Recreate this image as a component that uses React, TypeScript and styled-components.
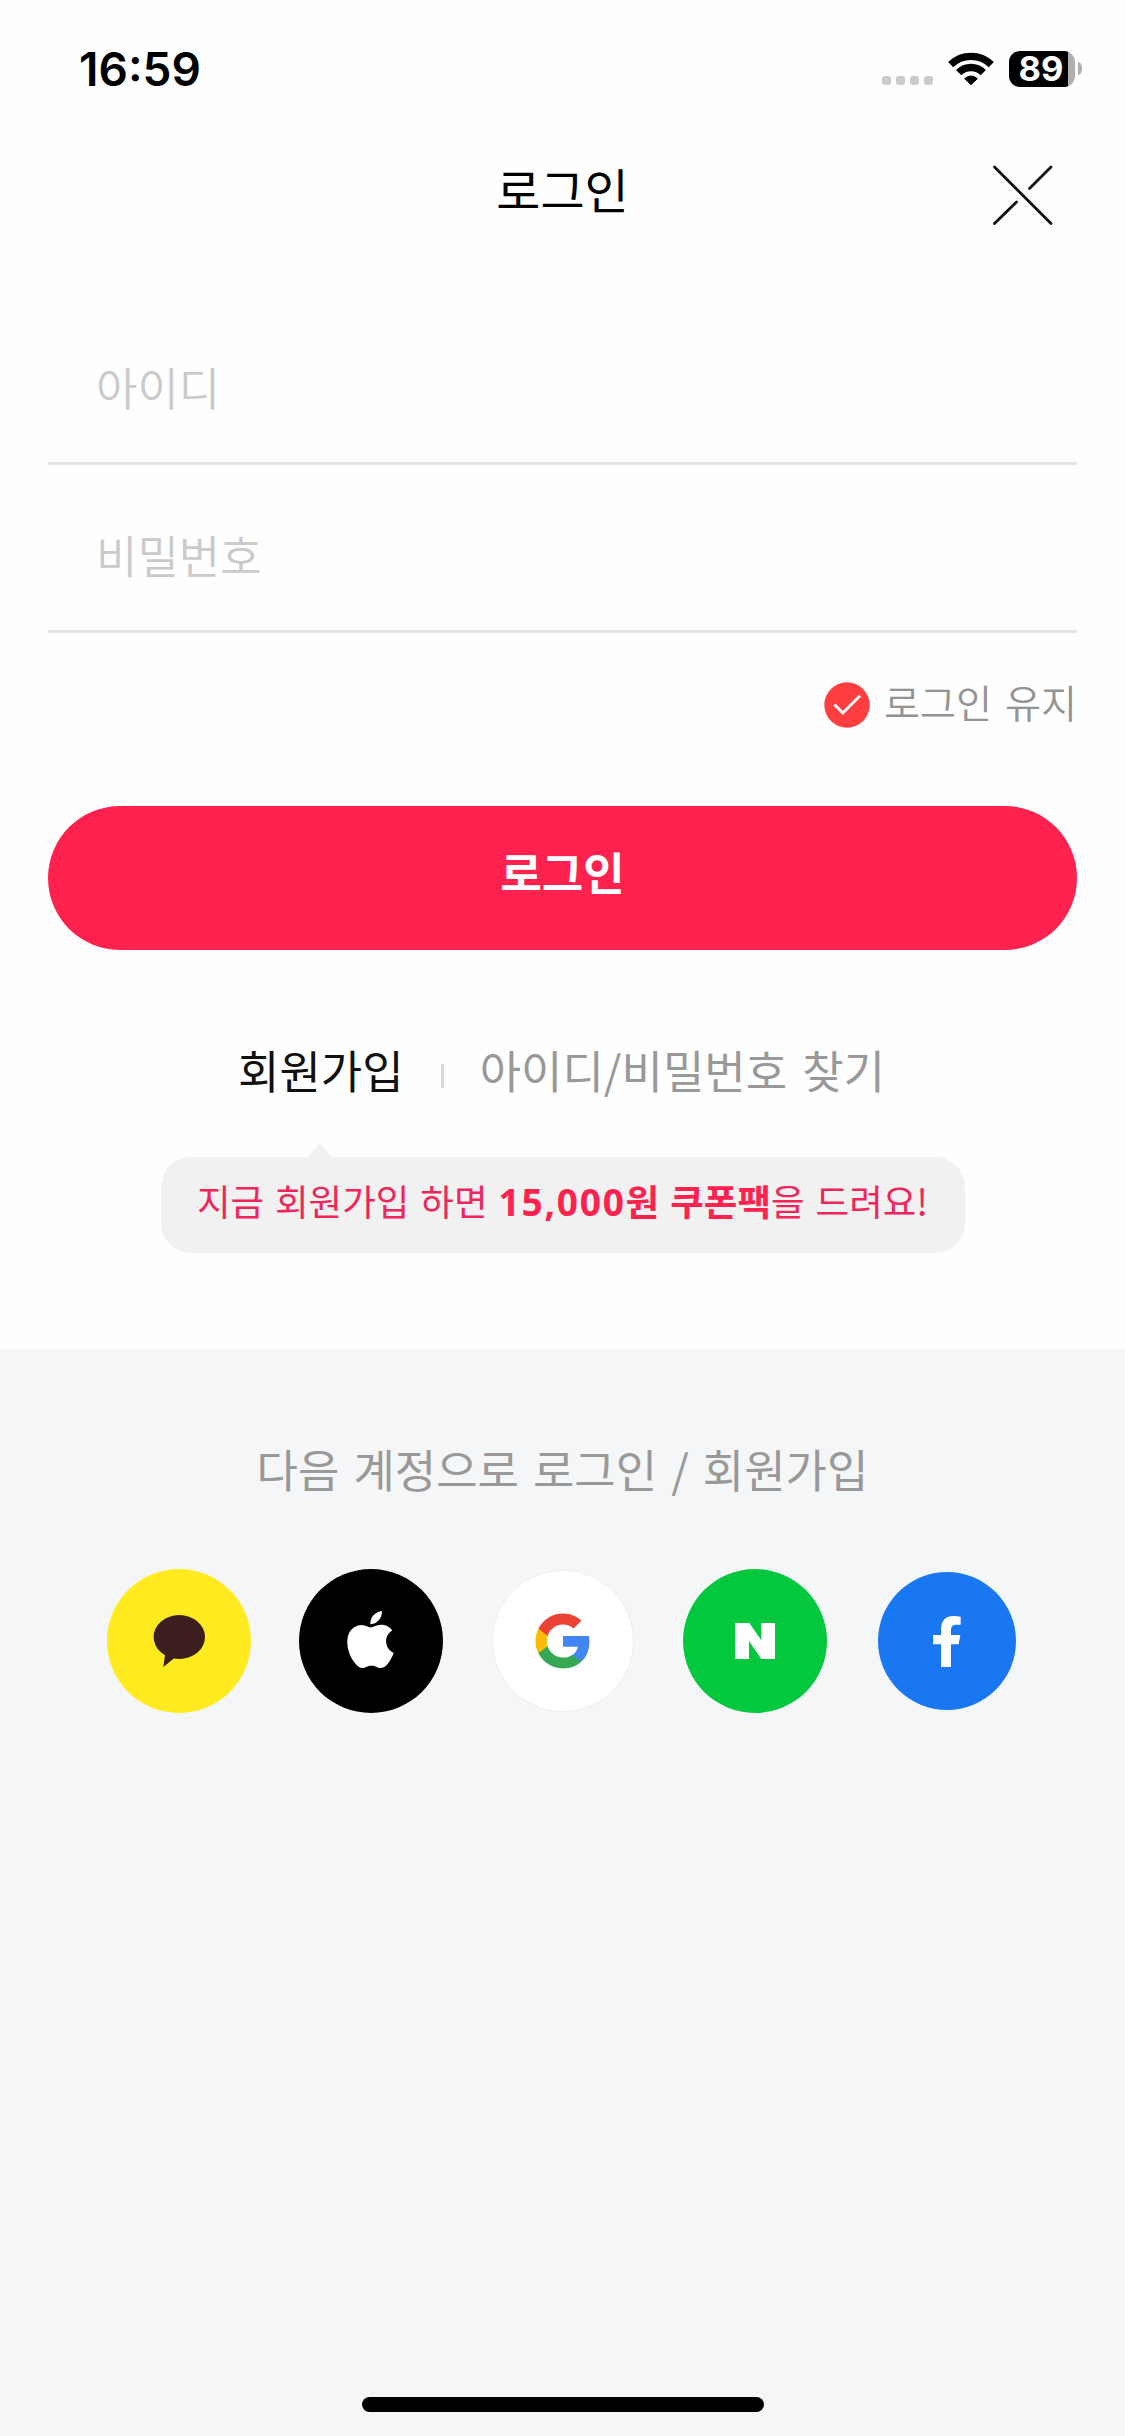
import React from "react";
import styled, { createGlobalStyle } from "styled-components";
import { SiApple } from "react-icons/si";

const GlobalStyle = createGlobalStyle`
  * { box-sizing: border-box; }
  body {
    margin: 0;
    background: #fefefe;
    font-family: "Noto Sans CJK KR", "Noto Sans", sans-serif;
    color: #000;
  }
  button { font: inherit; border: 0; padding: 0; background: none; color: inherit; }
`;

const Screen = styled.div`
  width: 1125px;
  height: 2436px;
  display: flex;
  flex-direction: column;
  overflow: hidden;
`;

const StatusBar = styled.div`
  height: 132px;
  padding: 51px 43px 0 79px;
  display: flex;
  justify-content: space-between;
  align-items: flex-start;
`;

const Clock = styled.span`
  font: 600 46px/37px Inter, sans-serif;
`;

const StatusIcons = styled.div`
  height: 36px;
  display: flex;
  align-items: flex-start;
`;

const Signal = styled.div`
  display: flex;
  gap: 5px;
  padding-top: 25px;
  margin-right: 15px;
`;

const SignalDot = styled.i`
  width: 9px;
  height: 9px;
  border-radius: 3px;
  background: #cbcbcb;
`;

const WifiIcon = styled.svg`
  width: 46px;
  height: 34px;
  margin: 1px 15px 0 0;
`;

const Battery = styled.div`
  width: 66px;
  height: 36px;
  border-radius: 11px;
  background: linear-gradient(to right, #000 59px, #b0b0b0 59px);
  display: flex;
  justify-content: center;
  padding-right: 2px;
  color: #fff;
  font: 700 34.5px/36px Inter, sans-serif;
`;

const BatteryCap = styled.i`
  width: 4px;
  height: 13px;
  margin: 11px 0 0 3px;
  border-radius: 0 4px 4px 0 / 0 6px 6px 0;
  background: #b0b0b0;
`;

const Header = styled.header`
  height: 162px;
  display: grid;
  grid-template-columns: 1fr auto 1fr;
  padding: 0 71px 0 0;
`;

const Title = styled.h1`
  grid-column: 2;
  margin: 0;
  padding-left: 71px;
  font-weight: 400;
  font-size: 48px;
  line-height: 112px;
  height: 112px;
`;

const CloseButton = styled.button`
  justify-self: end;
  align-self: start;
  margin-top: 32px;
  height: 62px;
  svg { display: block; }
`;

const Form = styled.form`
  padding: 0 48px;
  display: flex;
  flex-direction: column;
`;

const Field = styled.label<{ $height: number }>`
  height: ${(p) => p.$height}px;
  padding: 0 48px 40px;
  border-bottom: 3px solid #e5e5e5;
  display: flex;
  align-items: flex-end;
`;

const Placeholder = styled.span`
  font-size: 45px;
  line-height: 70px;
  font-weight: 350;
  color: #cacaca;
`;

const KeepRow = styled.div`
  height: 173px;
  padding-top: 39px;
  display: flex;
  justify-content: flex-end;
  align-items: flex-start;
  gap: 14px;
`;

const CheckIcon = styled.svg`
  width: 46px;
  height: 46px;
  margin-top: 10px;
`;

const KeepLabel = styled.span`
  font-size: 39.2px;
  line-height: 58px;
  font-weight: 350;
  word-spacing: 4px;
  color: #939393;
`;

const LoginButton = styled.button`
  && {
    height: 144px;
    border-radius: 72px;
    background: #ff224f;
    color: #fff;
    font-weight: 700;
    font-size: 45px;
    line-height: 132px;
    padding-bottom: 12px;
  }
`;

const Links = styled.nav`
  height: 193px;
  padding: 85px 2px 0 0;
  display: flex;
  justify-content: center;
  align-items: flex-start;
  font-size: 45px;
  line-height: 70px;
  word-spacing: 5px;
`;

const JoinLink = styled.a`
  color: #111;
`;

const FindLink = styled.a`
  color: #999;
`;

const Divider = styled.i`
  width: 3px;
  height: 24px;
  margin: 29px 36px 0 37px;
  background: #d8d8d8;
`;

const Coupon = styled.div`
  align-self: center;
  display: flex;
  flex-direction: column;
  height: 206px;
`;

const CouponArrow = styled.i`
  width: 24px;
  height: 14px;
  margin-left: 147px;
  background: #f1f1f1;
  clip-path: polygon(50% 0, 100% 100%, 0 100%);
`;

const CouponBubble = styled.p`
  width: 804px;
  height: 96px;
  margin: 0;
  border-radius: 30px;
  background: #f1f1f1;
  color: #f0265a;
  font-size: 36.5px;
  line-height: 87px;
  word-spacing: 2.8px;
  text-align: center;
  white-space: nowrap;
  b { font-weight: 700; color: #ff224f; }
`;

const Amount = styled.span`
  font-family: "Open Sans", sans-serif;
  font-size: 37px;
  line-height: 1;
  letter-spacing: 1.8px;
`;

const Social = styled.section`
  flex: 1;
  background: #f4f6f8;
  display: flex;
  flex-direction: column;
  align-items: center;
`;

const SocialTitle = styled.h2`
  margin: 85px 0 0;
  height: 135px;
  font-weight: 400;
  font-size: 45px;
  line-height: 70px;
  word-spacing: 3.9px;
  color: #999;
`;

const SocialList = styled.div`
  display: flex;
  gap: 48px;
`;

const SocialCell = styled.div`
  width: 144px;
  height: 144px;
  display: flex;
  align-items: center;
  justify-content: center;
`;

const SocialButton = styled.button<{ $bg: string; $size?: number; $outline?: boolean }>`
  && {
    width: ${(p) => p.$size ?? 144}px;
    height: ${(p) => p.$size ?? 144}px;
    border-radius: 50%;
    background: ${(p) => p.$bg};
    border: ${(p) => (p.$outline ? "1px solid #eeeff1" : "0")};
    display: flex;
    align-items: center;
    justify-content: center;
  }
  svg { display: block; flex: none; }
`;

const AppleMark = styled(SiApple)`
  width: 57px;
  height: 57px;
  margin-bottom: 4px;
  color: #fff;
`;

const HomeIndicator = styled.div`
  width: 402px;
  height: 15px;
  margin: auto 0 24px;
  border-radius: 8px;
  background: #000;
`;

export default function App() {
  return (
    <Screen>
      <GlobalStyle />
      <StatusBar>
        <Clock>16:59</Clock>
        <StatusIcons>
          <Signal>
            <SignalDot />
            <SignalDot />
            <SignalDot />
            <SignalDot />
          </Signal>
          <WifiIcon viewBox="0 0 138 102">
            <g fill="none" stroke="#000" strokeWidth="22">
              <path d="M8 38 A87 87 0 0 1 130 38" />
              <path d="M32 62 A52 52 0 0 1 106 62" />
            </g>
            <path
              d="M50 80 Q69 64 88 80 L69 98 Z"
              stroke="#000"
              strokeWidth="3"
              strokeLinejoin="round"
            />
          </WifiIcon>
          <Battery>89</Battery>
          <BatteryCap />
        </StatusIcons>
      </StatusBar>

      <Header>
        <Title>로그인</Title>
        <CloseButton aria-label="닫기">
          <svg width="62" height="62" viewBox="0 0 62 62" fill="none" stroke="#111" strokeWidth="2.8" strokeLinecap="round">
            <path d="M2.5 3 L59 59.5 M59 3 L37.5 24.5 M24.5 38 L2.5 59.5" />
          </svg>
        </CloseButton>
      </Header>

      <Form>
        <Field $height={171}>
          <Placeholder>아이디</Placeholder>
        </Field>
        <Field $height={168}>
          <Placeholder>비밀번호</Placeholder>
        </Field>
        <KeepRow>
          <CheckIcon viewBox="0 0 46 46">
            <circle cx="23" cy="23" r="22.7" fill="#ff3f3f" />
            <path d="M10.5 22.5 L18.8 31 L36 13.8" fill="none" stroke="#fff" strokeWidth="2.8" />
          </CheckIcon>
          <KeepLabel>로그인 유지</KeepLabel>
        </KeepRow>
        <LoginButton type="button">로그인</LoginButton>
      </Form>

      <Links>
        <JoinLink>회원가입</JoinLink>
        <Divider />
        <FindLink>아이디/비밀번호 찾기</FindLink>
      </Links>

      <Coupon>
        <CouponArrow />
        <CouponBubble>
          지금 회원가입 하면 <b><Amount>15,000</Amount>원 쿠폰팩</b>을 드려요!
        </CouponBubble>
      </Coupon>

      <Social>
        <SocialTitle>다음 계정으로 로그인 / 회원가입</SocialTitle>
        <SocialList>
          <SocialCell>
            <SocialButton $bg="#ffeb1f" aria-label="Kakao">
              <svg width="144" height="144" viewBox="0 0 144 144" fill="#3c1e1e">
                <ellipse cx="72.3" cy="68" rx="25.7" ry="22" />
                <path d="M58.3 84 L56.3 98 L68 88.5 Z" />
              </svg>
            </SocialButton>
          </SocialCell>
          <SocialCell>
            <SocialButton $bg="#000" aria-label="Apple">
              <AppleMark />
            </SocialButton>
          </SocialCell>
          <SocialCell>
            <SocialButton $bg="#fff" $size={142} $outline aria-label="Google">
              <svg width="60" height="60" viewBox="0 0 24 24">
                <path fill="#4285f4" d="M22.56 12.25c0-.78-.07-1.53-.2-2.25H12v4.26h5.92c-.26 1.37-1.04 2.53-2.21 3.31v2.77h3.57c2.08-1.92 3.28-4.74 3.28-8.09z" />
                <path fill="#34a853" d="M12 23c2.97 0 5.46-.98 7.28-2.66l-3.57-2.77c-.98.66-2.23 1.06-3.71 1.06-2.86 0-5.29-1.93-6.16-4.53H2.18v2.84C3.99 20.53 7.7 23 12 23z" />
                <path fill="#fbbc05" d="M5.84 14.09c-.22-.66-.35-1.36-.35-2.09s.13-1.43.35-2.09V7.07H2.18C1.43 8.55 1 10.22 1 12s.43 3.45 1.18 4.93l2.85-2.22.81-.62z" />
                <path fill="#ea4335" d="M12 5.38c1.62 0 3.06.56 4.21 1.64l3.15-3.15C17.45 2.09 14.97 1 12 1 7.7 1 3.99 3.47 2.18 7.07l3.66 2.84c.87-2.6 3.3-4.53 6.16-4.53z" />
              </svg>
            </SocialButton>
          </SocialCell>
          <SocialCell>
            <SocialButton $bg="#03c73c" aria-label="Naver">
              <svg width="40" height="36" viewBox="0 0 120 108" fill="#fff">
                <path d="M0 0H43L79 52V0H120V108H79L42 54V108H0Z" />
              </svg>
            </SocialButton>
          </SocialCell>
          <SocialCell>
            <SocialButton $bg="#1977f2" $size={138} aria-label="Facebook">
              <svg width="28" height="51" viewBox="0 0 84 153" fill="#fff">
                <path d="M24 153V85H0V57H24V42C24 14 37 0 62 0Q74 0 83 2V26H70C59 26 54 31 54 42V57H82L77 85H54V153Z" />
              </svg>
            </SocialButton>
          </SocialCell>
        </SocialList>
        <HomeIndicator />
      </Social>
    </Screen>
  );
}
